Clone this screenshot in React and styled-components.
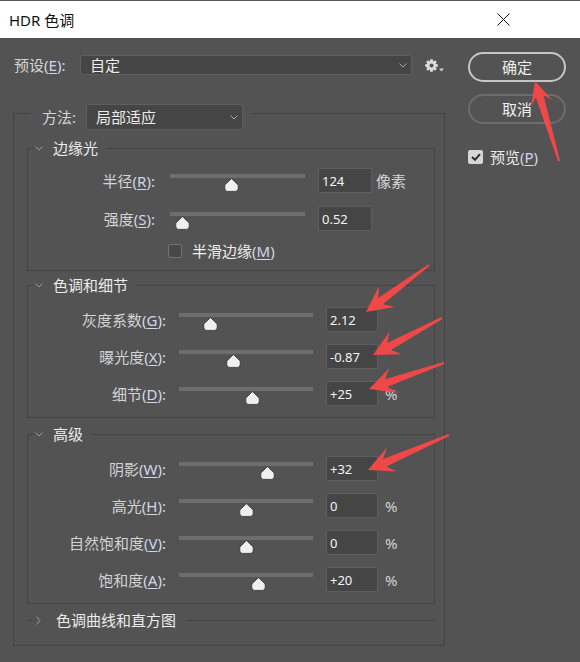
import React from "react";
import styled, { createGlobalStyle } from "styled-components";

const bg = "#535353";
const rule = "#434343";
const fieldBg = "#454545";
const fieldEdge = "#5e5e5e";
const labelColor = "#d4d4d4";
const brightText = "#ececec";
const red = "#f04848";

const GlobalStyle = createGlobalStyle`
  html, body {
    margin: 0;
    padding: 0;
    background: ${bg};
  }
  body {
    font-family: "Noto Sans", "Noto Sans CJK SC", sans-serif;
  }
`;

const Window = styled.div`
  position: relative;
  width: 580px;
  height: 662px;
  background: ${bg};
  overflow: hidden;
  font-size: 15px;
  line-height: 20px;
  color: ${labelColor};
`;

const TitleBar = styled.div`
  box-sizing: border-box;
  height: 38px;
  border-top: 1px solid #5a5a5a;
  background: #ffffff;
  color: #111111;
  display: flex;
  align-items: center;
  justify-content: space-between;
  padding: 0 70px 0 9px;
`;

const Body = styled.div`
  display: grid;
  grid-template-columns: 432px 98px;
  column-gap: 23px;
  padding: 14px 0 0 13px;
`;

const LeftCol = styled.div`
  padding-top: 3px;
`;

const PresetRow = styled.div`
  display: flex;
  align-items: center;
  height: 20px;
`;

const FieldLabel = styled.span`
  box-sizing: border-box;
  flex: none;
  width: ${(p) => p.$w}px;
  padding-left: ${(p) => p.$indent || 0}px;
  white-space: nowrap;
`;

const Key = styled.span`
  color: #cfd8e8;
  u {
    text-underline-offset: 2px;
  }
`;

const Dropdown = styled.div`
  box-sizing: border-box;
  flex: none;
  width: ${(p) => p.$w}px;
  height: ${(p) => p.$h}px;
  display: flex;
  align-items: center;
  justify-content: space-between;
  padding: 0 4px 0 9px;
  background: ${fieldBg};
  border: 1px solid ${fieldEdge};
  border-radius: 2px;
  color: ${brightText};
`;

const GearMenu = styled.div`
  margin-left: 13px;
  display: flex;
  align-items: flex-end;
  gap: 1px;
`;

const Group = styled.fieldset`
  box-sizing: border-box;
  width: 432px;
  min-width: 0;
  margin: 21px 0 0 0;
  padding: 0;
  border: 1px solid ${rule};
`;

const GroupLegend = styled.legend`
  display: flex;
  align-items: center;
  margin-left: 17px;
  padding: 8px 8px 0 11px;
`;

const GroupBody = styled.div`
  padding: 0 9px 15px 13px;
`;

const Section = styled.fieldset`
  min-width: 0;
  margin: ${(p) => p.$top}px 0 0 0;
  padding: 0;
  border: 1px solid ${rule};
  ${(p) => p.$collapsed && `border-width: 1px 0 0 0;`}
`;

const SectionLegend = styled.legend`
  display: flex;
  align-items: center;
  gap: ${(p) => (p.$collapsed ? 15 : 10)}px;
  height: 20px;
  margin-left: 5px;
  padding: 0 ${(p) => (p.$collapsed ? 10 : 8)}px 0 ${(p) => (p.$collapsed ? 4 : 2)}px;
  color: ${brightText};
`;

const Rows = styled.div`
  display: grid;
  grid-template-columns: ${(p) => p.$labelW}px ${(p) => p.$trackW}px auto;
  column-gap: 13px;
  row-gap: ${(p) => p.$gap}px;
  align-items: center;
  padding: ${(p) => p.$pt}px 0 ${(p) => p.$pb}px 0;
`;

const RowLabel = styled.div`
  text-align: right;
  white-space: nowrap;
  padding-right: ${(p) => p.$pr || 0}px;
`;

const Track = styled.div`
  position: relative;
  height: 25px;

  &::before {
    content: "";
    position: absolute;
    left: 0;
    right: 0;
    top: 6px;
    height: 4px;
    background: #6d6d6d;
  }
`;

const Knob = styled.svg`
  position: absolute;
  top: 10px;
  width: 15px;
  height: 14px;
  margin-left: -7.5px;
`;

const Field = styled.div`
  display: flex;
  align-items: center;
  gap: ${(p) => p.$gap}px;
`;

const NumberBox = styled.div`
  box-sizing: border-box;
  width: ${(p) => p.$w}px;
  height: 25px;
  display: flex;
  align-items: center;
  padding-left: 3px;
  background: ${fieldBg};
  border: 1px solid ${fieldEdge};
  color: #f4f4f4;
  font-size: 13px;
`;

const CheckRow = styled.div`
  grid-column: 2 / -1;
  display: flex;
  align-items: center;
  gap: 10px;
  height: 14px;
  margin-left: -2px;
  color: ${brightText};
`;

const Box = styled.div`
  box-sizing: border-box;
  width: ${(p) => p.$w || 14}px;
  height: 14px;
  flex: none;
  border-radius: 2px;
  display: flex;
  align-items: center;
  justify-content: center;
  background: ${(p) => (p.$checked ? "#d6d6d6" : "#484848")};
  border: 1px solid ${(p) => (p.$checked ? "#d6d6d6" : "#727272")};
`;

const RightCol = styled.div`
  display: flex;
  flex-direction: column;
  gap: 12px;
`;

const PillButton = styled.div`
  box-sizing: border-box;
  height: 30px;
  border-radius: 15px;
  border: 2px solid ${(p) => (p.$primary ? "#c6c6c6" : "#6d6d6d")};
  display: flex;
  align-items: center;
  justify-content: center;
  color: #f0f0f0;
`;

const PreviewRow = styled.div`
  display: flex;
  align-items: center;
  gap: 7px;
  height: 14px;
  margin-top: 14px;
  color: ${brightText};
`;

const Overlay = styled.svg`
  position: absolute;
  top: 0;
  left: 0;
  pointer-events: none;
`;

const Mnemonic = ({ text, k, colon = true }) => (
  <>
    {text}
    <Key>
      (<u>{k}</u>){colon ? ":" : ""}
    </Key>
  </>
);

const Chevron = ({ dir = "down", color = "#9c9c9c" }) =>
  dir === "down" ? (
    <svg width="8" height="5" viewBox="0 0 8 5">
      <polyline points="0.5,0.5 4,4 7.5,0.5" fill="none" stroke={color} strokeWidth="1" />
    </svg>
  ) : (
    <svg width="5" height="9" viewBox="0 0 5 9">
      <polyline points="0.5,0.5 4,4.5 0.5,8.5" fill="none" stroke={color} strokeWidth="1" />
    </svg>
  );

const gearPoints = (() => {
  const pts = [];
  for (let i = 0; i < 8; i++) {
    const a = (i * Math.PI) / 4;
    [
      [-0.38, 4.4],
      [-0.2, 6.4],
      [0.2, 6.4],
      [0.38, 4.4],
    ].forEach(([d, r]) => {
      pts.push([6.5 + r * Math.cos(a + d), 6.5 + r * Math.sin(a + d)].map((v) => v.toFixed(2)).join(","));
    });
  }
  return pts.join(" ");
})();

const Gear = () => (
  <svg width="13" height="13" viewBox="0 0 13 13">
    <polygon points={gearPoints} fill="#dcdcdc" />
    <circle cx="6.5" cy="6.5" r="2" fill={bg} />
  </svg>
);

const arrowPoints = ([tx, ty], [px, py], head = 26, half = 13) => {
  const dx = px - tx;
  const dy = py - ty;
  const len = Math.hypot(dx, dy);
  const ux = dx / len;
  const uy = dy / len;
  const nx = -uy;
  const ny = ux;
  const at = (d, w) => [px - ux * d + nx * w, py - uy * d + ny * w];
  return [
    [tx + nx * 1, ty + ny * 1],
    at(head * 0.7, 4),
    at(head, half),
    [px, py],
    at(head, -half),
    at(head * 0.7, -4),
    [tx - nx * 1, ty - ny * 1],
  ]
    .map((p) => p.map((v) => v.toFixed(1)).join(","))
    .join(" ");
};

const arrows = [
  { tail: [429, 265], tip: [366, 312] },
  { tail: [442, 318], tip: [373, 355] },
  { tail: [444, 363], tip: [369, 389] },
  { tail: [449, 435], tip: [368, 470] },
  { tail: [559, 161], tip: [535, 81], head: 23, half: 11 },
];

const edgeCfg = { labelW: 129, labelPr: 2, trackW: 135, inputW: 54, unitGap: 4 };
const toneCfg = { labelW: 138, labelPr: 0, trackW: 134, inputW: 52, unitGap: 7 };

const SliderRow = ({ label, k, value, pos, unit, cfg }) => (
  <>
    <RowLabel $pr={cfg.labelPr}>
      <Mnemonic text={label} k={k} />
    </RowLabel>
    <Track>
      <Knob viewBox="0 0 15 14" style={{ left: `${pos}%` }}>
        <path
          d="M7.5 0.6 L14.2 7 V10.6 Q14.2 13.4 11.4 13.4 H3.6 Q0.8 13.4 0.8 10.6 V7 Z"
          fill="#efefef"
          stroke="#2f2f2f"
          strokeWidth="0.8"
        />
      </Knob>
    </Track>
    <Field $gap={cfg.unitGap}>
      <NumberBox $w={cfg.inputW}>{value}</NumberBox>
      {unit && <span>{unit}</span>}
    </Field>
  </>
);

const toneRows = [
  { label: "灰度系数", k: "G", value: "2.12", pos: 23.7 },
  { label: "曝光度", k: "X", value: "-0.87", pos: 41 },
  { label: "细节", k: "D", value: "+25", pos: 54.5, unit: "%" },
];

const advancedRows = [
  { label: "阴影", k: "W", value: "+32", pos: 66.2 },
  { label: "高光", k: "H", value: "0", pos: 50.5, unit: "%" },
  { label: "自然饱和度", k: "V", value: "0", pos: 50.5, unit: "%" },
  { label: "饱和度", k: "A", value: "+20", pos: 59.7, unit: "%" },
];

export default function App() {
  return (
    <Window>
      <GlobalStyle />
      <TitleBar>
        <span>HDR 色调</span>
        <svg width="13" height="13" viewBox="0 0 13 13">
          <path d="M0.5 0.5 L12.5 12.5 M12.5 0.5 L0.5 12.5" stroke="#111" strokeWidth="1" />
        </svg>
      </TitleBar>

      <Body>
        <LeftCol>
          <PresetRow>
            <FieldLabel $w={67} $indent={1}>
              <Mnemonic text="预设" k="E" />
            </FieldLabel>
            <Dropdown $w={332} $h={20}>
              自定
              <Chevron color="#a8a8a8" />
            </Dropdown>
            <GearMenu>
              <Gear />
              <svg width="5" height="4" viewBox="0 0 5 4">
                <polygon points="0,0.5 5,0.5 2.5,3.5" fill="#cfcfcf" />
              </svg>
            </GearMenu>
          </PresetRow>

          <Group>
            <GroupLegend>
              <FieldLabel $w={44}>方法:</FieldLabel>
              <Dropdown $w={157} $h={26}>
                局部适应
                <Chevron color="#a8a8a8" />
              </Dropdown>
            </GroupLegend>
            <GroupBody>
              {/* 边缘光 */}
              <Section $top={8}>
                <SectionLegend>
                  <Chevron />
                  边缘光
                </SectionLegend>
                <Rows $labelW={edgeCfg.labelW} $trackW={edgeCfg.trackW} $gap={13} $pt={10} $pb={12}>
                  <SliderRow label="半径" k="R" value="124" pos={45.7} unit="像素" cfg={edgeCfg} />
                  <SliderRow label="强度" k="S" value="0.52" pos={9.6} cfg={edgeCfg} />
                  <CheckRow>
                    <Box />
                    <span>
                      <Mnemonic text="半滑边缘" k="M" colon={false} />
                    </span>
                  </CheckRow>
                </Rows>
              </Section>

              {/* 色调和细节 */}
              <Section $top={4}>
                <SectionLegend>
                  <Chevron />
                  色调和细节
                </SectionLegend>
                <Rows $labelW={toneCfg.labelW} $trackW={toneCfg.trackW} $gap={12} $pt={12} $pb={11}>
                  {toneRows.map((r) => (
                    <SliderRow key={r.k} {...r} cfg={toneCfg} />
                  ))}
                </Rows>
              </Section>

              {/* 高级 */}
              <Section $top={6}>
                <SectionLegend>
                  <Chevron />
                  高级
                </SectionLegend>
                <Rows $labelW={toneCfg.labelW} $trackW={toneCfg.trackW} $gap={12} $pt={12} $pb={11}>
                  {advancedRows.map((r) => (
                    <SliderRow key={r.k} {...r} cfg={toneCfg} />
                  ))}
                </Rows>
              </Section>

              <Section $top={6} $collapsed>
                <SectionLegend $collapsed>
                  <Chevron dir="right" />
                  色调曲线和直方图
                </SectionLegend>
              </Section>
            </GroupBody>
          </Group>
        </LeftCol>

        <RightCol>
          <PillButton $primary>确定</PillButton>
          <PillButton>取消</PillButton>
          <PreviewRow>
            <Box $checked $w={15}>
              <svg width="10" height="8" viewBox="0 0 10 8">
                <polyline points="1,4 4,6.8 9,1.2" fill="none" stroke="#2c2c2c" strokeWidth="2" />
              </svg>
            </Box>
            <span>
              <Mnemonic text="预览" k="P" colon={false} />
            </span>
          </PreviewRow>
        </RightCol>
      </Body>

      <Overlay width="580" height="662" viewBox="0 0 580 662">
        {arrows.map((a, i) => (
          <polygon key={i} points={arrowPoints(a.tail, a.tip, a.head, a.half)} fill={red} />
        ))}
      </Overlay>
    </Window>
  );
}
